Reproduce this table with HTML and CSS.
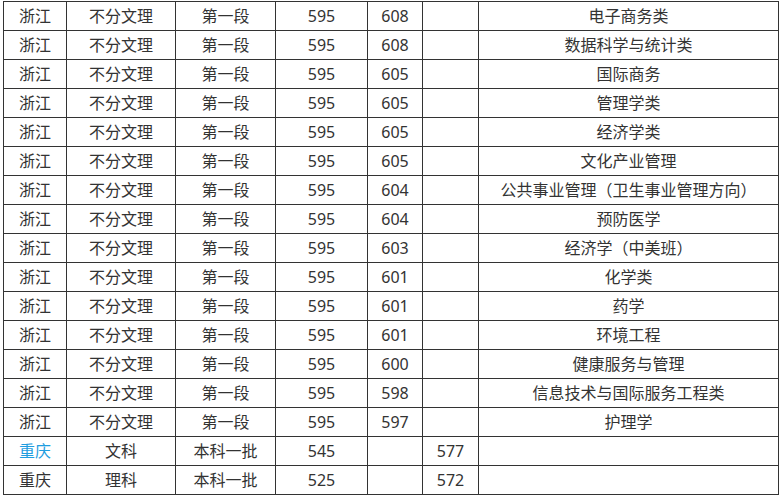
FILE: index.html
```html
<!DOCTYPE html>
<html lang="zh-CN">
<head>
<meta charset="utf-8">
<title>录取分数</title>
<link rel="stylesheet" href="styles.css">
</head>
<body>
<table class="score-table">
  <colgroup>
    <col class="c-prov">
    <col class="c-type">
    <col class="c-batch">
    <col class="c-line">
    <col class="c-min">
    <col class="c-avg">
    <col class="c-major">
  </colgroup>
  <tbody>
    <tr><td>浙江</td><td>不分文理</td><td>第一段</td><td>595</td><td>608</td><td></td><td>电子商务类</td></tr>
    <tr><td>浙江</td><td>不分文理</td><td>第一段</td><td>595</td><td>608</td><td></td><td>数据科学与统计类</td></tr>
    <tr><td>浙江</td><td>不分文理</td><td>第一段</td><td>595</td><td>605</td><td></td><td>国际商务</td></tr>
    <tr><td>浙江</td><td>不分文理</td><td>第一段</td><td>595</td><td>605</td><td></td><td>管理学类</td></tr>
    <tr><td>浙江</td><td>不分文理</td><td>第一段</td><td>595</td><td>605</td><td></td><td>经济学类</td></tr>
    <tr><td>浙江</td><td>不分文理</td><td>第一段</td><td>595</td><td>605</td><td></td><td>文化产业管理</td></tr>
    <tr><td>浙江</td><td>不分文理</td><td>第一段</td><td>595</td><td>604</td><td></td><td>公共事业管理（卫生事业管理方向）</td></tr>
    <tr><td>浙江</td><td>不分文理</td><td>第一段</td><td>595</td><td>604</td><td></td><td>预防医学</td></tr>
    <tr><td>浙江</td><td>不分文理</td><td>第一段</td><td>595</td><td>603</td><td></td><td>经济学（中美班）</td></tr>
    <tr><td>浙江</td><td>不分文理</td><td>第一段</td><td>595</td><td>601</td><td></td><td>化学类</td></tr>
    <tr><td>浙江</td><td>不分文理</td><td>第一段</td><td>595</td><td>601</td><td></td><td>药学</td></tr>
    <tr><td>浙江</td><td>不分文理</td><td>第一段</td><td>595</td><td>601</td><td></td><td>环境工程</td></tr>
    <tr><td>浙江</td><td>不分文理</td><td>第一段</td><td>595</td><td>600</td><td></td><td>健康服务与管理</td></tr>
    <tr><td>浙江</td><td>不分文理</td><td>第一段</td><td>595</td><td>598</td><td></td><td>信息技术与国际服务工程类</td></tr>
    <tr><td>浙江</td><td>不分文理</td><td>第一段</td><td>595</td><td>597</td><td></td><td>护理学</td></tr>
    <tr><td class="link">重庆</td><td>文科</td><td>本科一批</td><td>545</td><td></td><td>577</td><td></td></tr>
    <tr><td>重庆</td><td>理科</td><td>本科一批</td><td>525</td><td></td><td>572</td><td></td></tr>
  </tbody>
</table>
</body>
</html>
```

FILE: styles.css
```css
html, body {
  margin: 0;
  padding: 0;
  background: #ffffff;
}

body {
  padding: 1px 0 0 3px;
  font-family: "Noto Sans", "Noto Sans CJK SC", sans-serif;
  font-size: 16px;
  color: #333333;
}

.score-table {
  border-collapse: collapse;
  table-layout: fixed;
  width: 775px;
}

.score-table col.c-prov { width: 63px; }
.score-table col.c-type { width: 109px; }
.score-table col.c-batch { width: 100px; }
.score-table col.c-line { width: 92px; }
.score-table col.c-min { width: 55px; }
.score-table col.c-avg { width: 56px; }
.score-table col.c-major { width: 300px; }

.score-table tr {
  height: 29px;
}

.score-table td {
  border: 1px solid #333333;
  padding: 0;
  text-align: center;
  vertical-align: middle;
  line-height: 20px;
  white-space: nowrap;
  overflow: hidden;
}

.score-table td.link {
  color: #1f9de0;
}
```
